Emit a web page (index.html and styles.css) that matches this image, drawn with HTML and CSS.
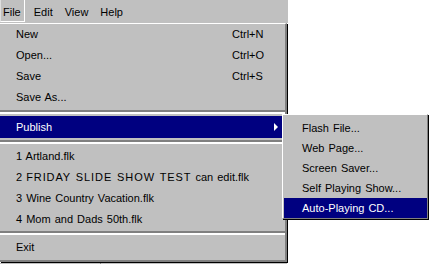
FILE: index.html
```html
<!DOCTYPE html>
<html lang="en">
<head>
  <meta charset="UTF-8">
  <title>File Menu</title>
  <link rel="stylesheet" href="styles.css">
</head>
<body>
  <div class="screen">
    <div class="menubar">
      <span class="menubar-item is-open">File</span>
      <span class="menubar-item">Edit</span>
      <span class="menubar-item">View</span>
      <span class="menubar-item">Help</span>
    </div>

    <div class="menu">
      <div class="menu-item"><span class="label">New</span><span class="key">Ctrl+N</span></div>
      <div class="menu-item"><span class="label">Open...</span><span class="key">Ctrl+O</span></div>
      <div class="menu-item"><span class="label">Save</span><span class="key">Ctrl+S</span></div>
      <div class="menu-item"><span class="label">Save As...</span></div>
      <div class="separator"></div>

      <div class="menu-item is-active has-submenu">
        <span class="label">Publish</span>
        <span class="arrow"></span>

        <div class="submenu">
          <div class="submenu-item">Flash File...</div>
          <div class="submenu-item">Web Page...</div>
          <div class="submenu-item">Screen Saver...</div>
          <div class="submenu-item">Self Playing Show...</div>
          <div class="submenu-item is-active">Auto-Playing CD...</div>
        </div>
      </div>
      <div class="separator"></div>

      <div class="menu-item"><span class="label">1 Artland.flk</span></div>
      <div class="menu-item"><span class="label">2 <span class="caps">FRIDAY SLIDE SHOW TEST</span> can edit.flk</span></div>
      <div class="menu-item"><span class="label">3 Wine Country Vacation.flk</span></div>
      <div class="menu-item"><span class="label">4 Mom and Dads 50th.flk</span></div>
      <div class="separator separator-tight"></div>

      <div class="menu-item"><span class="label">Exit</span></div>
    </div>

    <div class="statusbar"><span class="status-divider"></span></div>
  </div>
</body>
</html>
```

FILE: styles.css
```css
body {
  margin: 0;
  padding: 0;
  background: #ffffff;
  font-family: "Liberation Sans", Arial, sans-serif;
  font-size: 11px;
  color: #000000;
}

.screen {
  width: 288px;
}

/* top menu bar */
.menubar {
  display: flex;
  align-items: flex-start;
  gap: 6px;
  height: 23px;
  background: #c0c0c0;
}

.menubar-item {
  height: 20px;
  padding: 2px 3px 0 3px;
  line-height: 20px;
}

.menubar-item.is-open {
  height: 19px;
  border: 1px solid #ffffff;
  border-top: none;
  border-left-color: #dfdfdf;
  padding-left: 2px;
}

/* dropdown */
.menu {
  position: relative;
  width: 285px;
  background: #c0c0c0;
  border-top: 1px solid #ffffff;
  border-right: 2px solid #808080;
  border-bottom: 2px solid #808080;
  box-shadow: 1px 1px 0 #000000;
  padding-bottom: 2px;
}

.menu-item {
  position: relative;
  display: flex;
  align-items: center;
  height: 21px;
  line-height: 21px;
  padding-left: 16px;
  white-space: nowrap;
  word-spacing: 1px;
}

.menu-item .label {
  flex: 1;
}

.menu-item .key {
  width: 53px;
}

/* the old bitmap font draws capitals a little wider */
.caps {
  letter-spacing: 0.9px;
}

.menu-item.is-active {
  height: 22px;
  background: #000080;
  color: #ffffff;
}

.arrow {
  width: 0;
  height: 0;
  margin-right: 7px;
  margin-top: -1px;
  border-left: 4px solid #ffffff;
  border-top: 4px solid transparent;
  border-bottom: 4px solid transparent;
}

.separator {
  height: 0;
  margin: 2px 0;
  border-top: 2px solid #808080;
  border-bottom: 2px solid #ffffff;
}

.separator-tight {
  margin-top: 1px;
}

/* publish flyout */
.submenu {
  position: absolute;
  top: -2px;
  left: 282px;
  width: 143px;
  padding: 3px 0 0 1px;
  background: #c0c0c0;
  border-top: 1px solid #ffffff;
  border-left: 1px solid #ffffff;
  border-right: 1px solid #808080;
  border-bottom: 1px solid #808080;
  box-shadow: 1px 1px 0 #000000;
  color: #000000;
  word-spacing: 1px;
  z-index: 2;
}

.submenu-item {
  height: 20px;
  line-height: 20px;
  padding-left: 18px;
  white-space: nowrap;
}

.submenu-item.is-active {
  background: #000080;
  color: #ffffff;
}

/* strip of the window underneath */
.statusbar {
  width: 287px;
  height: 2px;
  margin-top: 1px;
  background: #c0c0c0;
}

.status-divider {
  display: block;
  width: 0;
  height: 2px;
  margin-left: 100px;
  border-left: 1px solid #808080;
}
```
